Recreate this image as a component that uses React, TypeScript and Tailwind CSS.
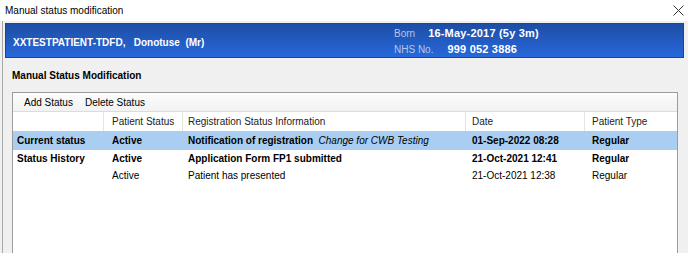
import React from "react";

const cols = "grid grid-cols-[90px_79px_283px_119px_1fr]";

export default function App() {
  return (
    <div className="w-[688px] h-[253px] bg-[#f0f0f0] overflow-hidden font-['Liberation_Sans',Arial,sans-serif] text-black">
      {/* title bar */}
      <div className="h-[21px] bg-white flex items-center justify-between pl-[5px] pr-[3px]">
        <span className="text-[10px] leading-[12px]">Manual status modification</span>
        <svg width="11" height="11" viewBox="0 0 11 11" className="mr-[1px]">
          <path d="M0.5 0.5 L10.5 10.5 M10.5 0.5 L0.5 10.5" stroke="#333" strokeWidth="1" fill="none" />
        </svg>
      </div>
      {/* body */}
      <div className="ml-[2px] border-l border-[#a8a8a8] h-[232px] pl-[2px] pr-[4px] pt-[2px] overflow-hidden">
        {/* banner */}
        <div className="h-[35px] border border-[#1a4594] bg-gradient-to-b from-[#1d4ea4] to-[#2868dc] flex text-white">
          <div className="w-[388px] pl-[7px] pt-[13px] text-[10px] leading-[12px] font-bold whitespace-pre">
            {"XXTESTPATIENT-TDFD,   Donotuse  (Mr)"}
          </div>
          <div className="pt-[1px] flex flex-col">
            <div className="flex items-center h-[16px]">
              <span className="text-[10px] text-[#b5c7e9]">Born</span>
              <span className="ml-[13px] text-[11px] font-bold tracking-[0.2px]">16-May-2017 (5y 3m)</span>
            </div>
            <div className="flex items-center h-[16px]">
              <span className="text-[10px] text-[#b5c7e9]">NHS No.</span>
              <span className="ml-[14px] text-[11px] font-bold tracking-[0.2px]">999 052 3886</span>
            </div>
          </div>
        </div>
        <div className="pl-[7px]">
          <div className="mt-[12px] text-[10px] leading-[12px] font-bold">Manual Status Modification</div>
          {/* panel */}
          <div className="mt-[10px] w-[666px] h-[200px] border border-[#9c9c9c] bg-white text-[10px]">
            <div className="h-[19px] bg-gradient-to-b from-[#fcfcfc] to-[#f2f2f2] border-b border-[#dcdcdc] flex items-center">
              <span className="ml-[11px]">Add Status</span>
              <span className="ml-[12px]">Delete Status</span>
            </div>
            <div className={`${cols} h-[19px] items-center text-[#222]`}>
              <div className="pl-[4px] h-full" />
              <div className="pl-[8px] h-full flex items-center border-l border-[#e3e3e3]">Patient Status</div>
              <div className="pl-[5px] h-full flex items-center border-l border-[#e3e3e3]">Registration Status Information</div>
              <div className="pl-[6px] h-full flex items-center border-l border-[#e3e3e3]">Date</div>
              <div className="pl-[7px] h-full flex items-center border-l border-[#e3e3e3]">Patient Type</div>
            </div>
            <div className={`${cols} h-[19px] items-center bg-[#a9cef1] font-bold`}>
              <div className="pl-[4px]">Current status</div>
              <div className="pl-[8px] border-l border-transparent">Active</div>
              <div className="pl-[5px] border-l border-transparent whitespace-pre">
                Notification of registration{"  "}
                <span className="font-normal italic">Change for CWB Testing</span>
              </div>
              <div className="pl-[6px] border-l border-transparent">01-Sep-2022 08:28</div>
              <div className="pl-[7px] border-l border-transparent">Regular</div>
            </div>
            <div className={`${cols} h-[17px] items-center font-bold`}>
              <div className="pl-[4px]">Status History</div>
              <div className="pl-[8px] border-l border-transparent">Active</div>
              <div className="pl-[5px] border-l border-transparent">Application Form FP1 submitted</div>
              <div className="pl-[6px] border-l border-transparent">21-Oct-2021 12:41</div>
              <div className="pl-[7px] border-l border-transparent">Regular</div>
            </div>
            <div className={`${cols} h-[17px] items-center`}>
              <div className="pl-[4px]" />
              <div className="pl-[8px] border-l border-transparent">Active</div>
              <div className="pl-[5px] border-l border-transparent">Patient has presented</div>
              <div className="pl-[6px] border-l border-transparent">21-Oct-2021 12:38</div>
              <div className="pl-[7px] border-l border-transparent">Regular</div>
            </div>
          </div>
        </div>
      </div>
    </div>
  );
}
